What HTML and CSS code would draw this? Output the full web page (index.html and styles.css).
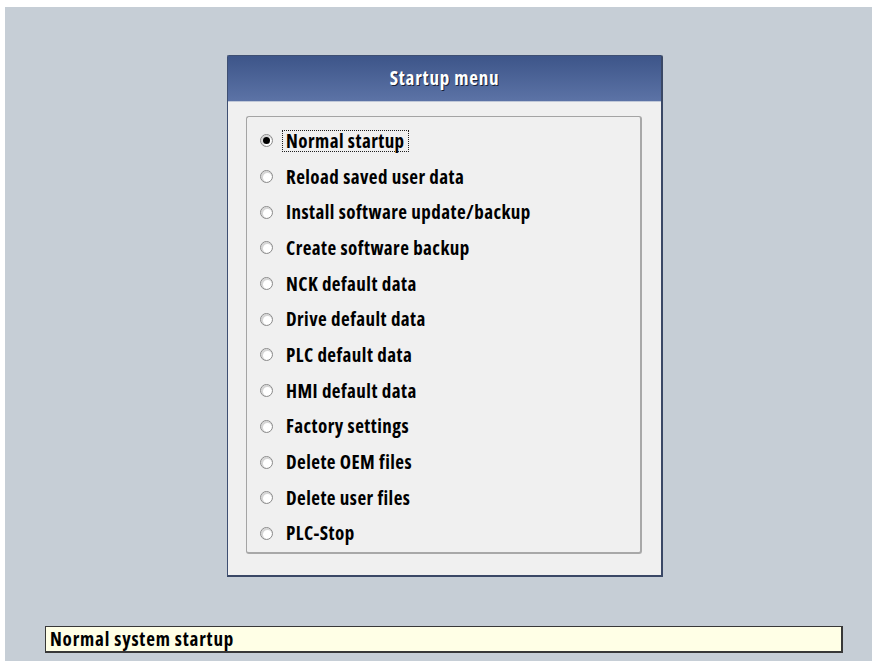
FILE: index.html
```html
<!DOCTYPE html>
<html>
<head>
<meta charset="utf-8">
<title>Startup menu</title>
<link rel="stylesheet" href="styles.css">
</head>
<body>
<div class="screen">
  <div class="dialog">
    <div class="dialog-title">Startup menu</div>
    <div class="dialog-body">
      <div class="group">
        <label class="option"><span class="radio checked"></span><span class="text focus">Normal startup</span></label>
        <label class="option"><span class="radio"></span><span class="text">Reload saved user data</span></label>
        <label class="option"><span class="radio"></span><span class="text">Install software update/backup</span></label>
        <label class="option"><span class="radio"></span><span class="text">Create software backup</span></label>
        <label class="option"><span class="radio"></span><span class="text">NCK default data</span></label>
        <label class="option"><span class="radio"></span><span class="text">Drive default data</span></label>
        <label class="option"><span class="radio"></span><span class="text">PLC default data</span></label>
        <label class="option"><span class="radio"></span><span class="text">HMI default data</span></label>
        <label class="option"><span class="radio"></span><span class="text">Factory settings</span></label>
        <label class="option"><span class="radio"></span><span class="text">Delete OEM files</span></label>
        <label class="option"><span class="radio"></span><span class="text">Delete user files</span></label>
        <label class="option"><span class="radio"></span><span class="text">PLC-Stop</span></label>
      </div>
    </div>
  </div>
  <div class="status">Normal system startup</div>
</div>
</body>
</html>
```

FILE: styles.css
```css
html, body {
  margin: 0;
  padding: 0;
  background: #ffffff;
}

body {
  font-family: "Open Sans", "Liberation Sans", sans-serif;
  font-weight: 700;
  font-stretch: 75%;
  font-size: 19px;
  letter-spacing: 0.45px;
  color: #000;
}

.screen {
  margin: 7px 0 0 5px;
  height: 654px;
  background: #c6ced6;
  display: flex;
  flex-direction: column;
  overflow: hidden;
}

.dialog {
  margin: 48px 0 0 222px;
  width: 433px;
  height: 519px;
  border: 1px solid #3e4f72;
  border-right: 2px solid #3a4866;
  border-bottom: 2px solid #3a4866;
  border-radius: 2px 2px 0 0;
  background: #f0f0f0;
  display: flex;
  flex-direction: column;
}

.dialog-title {
  height: 45px;
  background: linear-gradient(#3d5589, #5c73a6);
  color: #ffffff;
  text-align: center;
  line-height: 44px;
  letter-spacing: 0.8px;
  text-shadow: 1px 1px 0 #1a2238;
  border-bottom: 1px solid #c0c8d8;
}

.dialog-body {
  flex: 1;
  padding: 14px 19px 20px 18px;
}

.group {
  height: 438px;
  border: 1px solid #a4a4a4;
  border-right: 2px solid #a8a8a8;
  border-bottom: 2px solid #a8a8a8;
  border-radius: 3px;
  padding-top: 6px;
  box-sizing: border-box;
}

.option {
  display: flex;
  align-items: center;
  height: 35.7px;
  padding-left: 13px;
}

.radio {
  width: 11px;
  height: 11px;
  border: 1px solid #8a8a8a;
  border-radius: 50%;
  background: #ffffff;
  box-shadow: inset 1px 1px 0 1px #d6d6d6;
  display: flex;
  align-items: center;
  justify-content: center;
  flex: none;
}

.radio.checked::after {
  content: "";
  width: 7px;
  height: 7px;
  border-radius: 50%;
  background: #000;
}

.text {
  margin-left: 9px;
  padding: 0 3px 0 3px;
  line-height: 20px;
  border: 1px dotted transparent;
}

.text.focus {
  border-color: #202020;
}

.status {
  margin: 49px 0 0 40px;
  width: 791px;
  height: 24px;
  background: #ffffe6;
  border: 2px solid #383838;
  border-top-width: 1px;
  border-left-width: 1px;
  line-height: 24px;
  letter-spacing: 0.8px;
  padding-left: 4px;
  box-sizing: content-box;
}
```
